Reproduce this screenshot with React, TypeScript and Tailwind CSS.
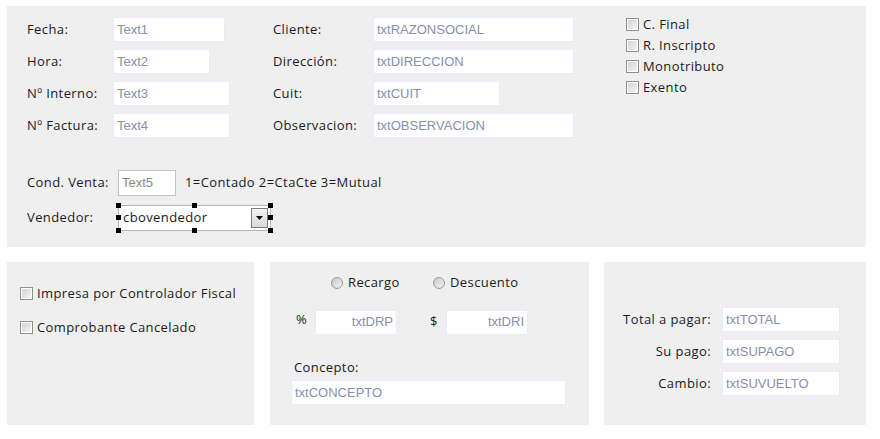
import React from "react";

const labelFont = { fontFamily: '"Open Sans", "Liberation Sans", sans-serif' };

const Box = ({ text, w, right = false }: { text: string; w: string; right?: boolean }) => (
  <div
    className={`h-[25px] ${w} shrink-0 bg-white border border-[#e6edf9] flex items-center px-[3px] text-[13px] tracking-normal text-[#8690ab] ${
      right ? "justify-end" : ""
    }`}
    style={{ fontFamily: '"Liberation Sans", Arial, sans-serif' }}
  >
    {text}
  </div>
);

const Check = ({ label }: { label: string }) => (
  <div className="flex items-center gap-[4px] leading-[18px]">
    <span className="w-[13px] h-[13px] border border-[#8f8f8f] bg-white p-[1px] shrink-0">
      <span className="block w-full h-full bg-gradient-to-br from-[#d4d4d4] to-[#f4f4f4]" />
    </span>
    <span>{label}</span>
  </div>
);

const Radio = ({ label, w = "" }: { label: string; w?: string }) => (
  <div className={`flex items-center gap-[5px] ${w}`}>
    <span className="w-[12px] h-[12px] rounded-full border border-[#9a9a9a] bg-gradient-to-br from-[#c9c9c9] to-[#f2f2f2] shrink-0" />
    <span>{label}</span>
  </div>
);

const Handle = ({ cls }: { cls: string }) => (
  <span className={`absolute w-[5px] h-[5px] bg-black ${cls}`} />
);

export default function App() {
  return (
    <div
      className="w-[880px] h-[439px] bg-white pt-[6px] pl-[7px] text-[13px] tracking-[0.4px] text-[#1b1b1b]"
      style={labelFont}
    >
      {/* top panel */}
      <div className="w-[859px] h-[241px] bg-[#efefef] pl-[20px] pt-[11px]">
        <div className="flex">
          <div className="flex flex-col gap-[7px] w-[246px]">
            {[
              ["Fecha:", "Text1", "w-[112px]"],
              ["Hora:", "Text2", "w-[97px]"],
              ["Nº Interno:", "Text3", "w-[117px]"],
              ["Nº Factura:", "Text4", "w-[117px]"],
            ].map(([l, t, w]) => (
              <div key={l} className="flex items-center">
                <span className="w-[86px]">{l}</span>
                <Box text={t} w={w} />
              </div>
            ))}
          </div>
          <div className="flex flex-col gap-[7px] w-[353px]">
            {[
              ["Cliente:", "txtRAZONSOCIAL", "w-[201px]"],
              ["Dirección:", "txtDIRECCION", "w-[201px]"],
              ["Cuit:", "txtCUIT", "w-[127px]"],
              ["Observacion:", "txtOBSERVACION", "w-[201px]"],
            ].map(([l, t, w]) => (
              <div key={l} className="flex items-center">
                <span className="w-[100px]">{l}</span>
                <Box text={t} w={w} />
              </div>
            ))}
          </div>
          <div className="flex flex-col gap-[3px] -mt-[2px]">
            <Check label="C. Final" />
            <Check label="R. Inscripto" />
            <Check label="Monotributo" />
            <Check label="Exento" />
          </div>
        </div>

        <div className="mt-[32px] flex items-center">
          <span className="w-[91px]">Cond. Venta:</span>
          <div
            className="w-[58px] h-[26px] bg-white border border-[#c4c4c4] flex items-center px-[3px] text-[13px] tracking-normal text-[#8a8a8a]"
            style={{ fontFamily: '"Liberation Sans", Arial, sans-serif' }}
          >
            Text5
          </div>
          <span className="ml-[9px]">1=Contado 2=CtaCte 3=Mutual</span>
        </div>

        <div className="mt-[9px] flex items-center">
          <span className="w-[91px]">Vendedor:</span>
          <div className="relative w-[153px] h-[26px] bg-white border border-[#b5b5b5] flex items-center pl-[4px]">
            <span className="flex-1">cbovendedor</span>
            <span className="w-[17px] h-[20px] mr-[2px] border border-[#7d7d7d] bg-gradient-to-b from-[#f4f4f4] to-[#d9d9d9] flex items-center justify-center">
              <svg width="7" height="4" viewBox="0 0 7 4">
                <path d="M0 0h7L3.5 4z" fill="#111" />
              </svg>
            </span>
            <Handle cls="-left-[3px] -top-[3px]" />
            <Handle cls="left-[73px] -top-[3px]" />
            <Handle cls="-right-[3px] -top-[3px]" />
            <Handle cls="-left-[3px] top-[9px]" />
            <Handle cls="-right-[3px] top-[9px]" />
            <Handle cls="-left-[3px] -bottom-[3px]" />
            <Handle cls="left-[73px] -bottom-[3px]" />
            <Handle cls="-right-[3px] -bottom-[3px]" />
          </div>
        </div>
      </div>

      {/* bottom panels */}
      <div className="mt-[15px] flex">
        <div className="w-[247px] h-[163px] bg-[#efefef] pl-[13px] pt-[22px] flex flex-col gap-[16px]">
          <Check label="Impresa por Controlador Fiscal" />
          <Check label="Comprobante Cancelado" />
        </div>

        <div className="ml-[16px] w-[319px] h-[163px] bg-[#efefef] pt-[11px]">
          <div className="flex pl-[61px]">
            <Radio label="Recargo" w="w-[102px]" />
            <Radio label="Descuento" />
          </div>
          <div className="mt-[17px] flex items-center pl-[26px]">
            <span className="w-[19px] -mt-[4px]">%</span>
            <Box text="txtDRP" w="w-[82px]" right />
            <span className="ml-[33px] w-[16px]">$</span>
            <Box text="txtDRI" w="w-[82px]" right />
          </div>
          <div className="mt-[23px] pl-[24px]">Concepto:</div>
          <div className="mt-[3px] pl-[21px]">
            <Box text="txtCONCEPTO" w="w-[275px]" />
          </div>
        </div>

        <div className="ml-[15px] w-[262px] h-[163px] bg-[#efefef] pt-[45px] flex flex-col gap-[7px]">
          {[
            ["Total a pagar:", "txtTOTAL"],
            ["Su pago:", "txtSUPAGO"],
            ["Cambio:", "txtSUVUELTO"],
          ].map(([l, t]) => (
            <div key={l} className="flex items-center">
              <span className="w-[107px] text-right">{l}</span>
              <span className="w-[11px]" />
              <Box text={t} w="w-[118px]" />
            </div>
          ))}
        </div>
      </div>
    </div>
  );
}
